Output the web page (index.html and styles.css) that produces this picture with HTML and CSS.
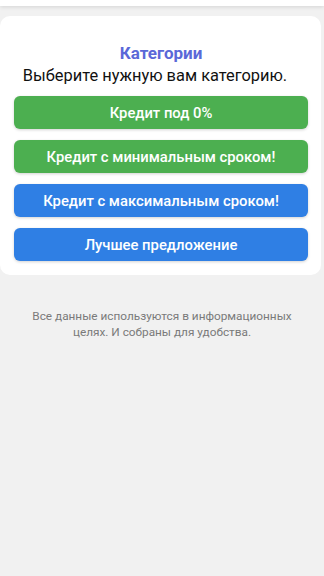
FILE: index.html
```html
<!DOCTYPE html>
<html lang="ru">
<head>
<meta charset="utf-8">
<link rel="stylesheet" href="styles.css">
</head>
<body>
<div class="topbar"></div>
<main class="card">
  <h1 class="title">Категории</h1>
  <p class="subtitle">Выберите нужную вам категорию.</p>
  <div class="buttons">
    <button class="btn green">Кредит под 0%</button>
    <button class="btn green">Кредит с минимальным сроком!</button>
    <button class="btn blue">Кредит с максимальным сроком!</button>
    <button class="btn blue">Лучшее предложение</button>
  </div>
</main>
<p class="note">Все данные используются в информационных<br>целях. И собраны для удобства.</p>
</body>
</html>
```

FILE: styles.css
```css
html, body {
  margin: 0;
  padding: 0;
  background: #f1f1f1;
  font-family: Roboto, "Noto Sans", sans-serif;
}
.topbar {
  height: 6px;
  background: #fff;
  box-shadow: 0 1px 4px rgba(0,0,0,0.12);
}
.card {
  margin: 10px 3px 0 0;
  background: #fff;
  border-radius: 10px;
  padding: 26px 13px 14px 14px;
}
.title {
  margin: 0;
  text-align: center;
  font-size: 17px;
  line-height: 22px;
  font-weight: 700;
  color: #5a68d8;
}
.subtitle {
  margin: 2px 0 10px;
  text-align: center;
  font-size: 16.4px;
  line-height: 20px;
  color: #111;
  padding-right: 12px;
}
.buttons {
  display: flex;
  flex-direction: column;
  gap: 11px;
}
.btn {
  display: block;
  width: 100%;
  height: 33px;
  border: none;
  border-radius: 6px;
  color: #fff;
  font-family: Roboto, "Noto Sans", sans-serif;
  font-size: 14.8px;
  font-weight: 500;
  box-shadow: 0 1px 3px rgba(0,0,0,0.18);
  padding: 0;
}
.green { background: #4caf50; }
.blue { background: #2f7fe4; }
.note {
  margin: 33px 0 0;
  text-align: center;
  font-size: 11.8px;
  line-height: 16px;
  color: #7a7a7a;
}
```
